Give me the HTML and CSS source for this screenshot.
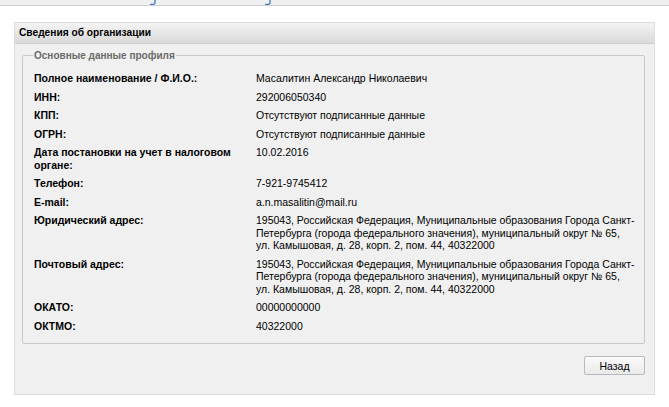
FILE: index.html
```html
<!DOCTYPE html>
<html lang="ru">
<head>
    <meta charset="UTF-8">
    <title>Сведения об организации</title>
    <link rel="stylesheet" href="styles.css">
</head>
<body>
    <div class="topnav">
        <svg class="topnav-mark m1" width="8" height="5" viewBox="0 0 8 5"><path d="M6 0 V2.5 Q6 4.5 3.5 4.5 H1" fill="none" stroke="#4a7dbd" stroke-width="1.4"/></svg>
        <svg class="topnav-mark m2" width="8" height="5" viewBox="0 0 8 5"><path d="M6 0 V2.5 Q6 4.5 3.5 4.5 H1" fill="none" stroke="#4a7dbd" stroke-width="1.4"/></svg>
    </div>

    <div class="panel">
        <div class="panel-header">Сведения об организации</div>
        <div class="panel-body">
            <fieldset class="group">
                <legend>Основные данные профиля</legend>
                <table class="info">
                    <tr><th>Полное наименование / Ф.И.О.:</th><td>Масалитин Александр Николаевич</td></tr>
                    <tr><th>ИНН:</th><td>292006050340</td></tr>
                    <tr><th>КПП:</th><td>Отсутствуют подписанные данные</td></tr>
                    <tr><th>ОГРН:</th><td>Отсутствуют подписанные данные</td></tr>
                    <tr><th>Дата постановки на учет в налоговом органе:</th><td>10.02.2016</td></tr>
                    <tr><th>Телефон:</th><td>7-921-9745412</td></tr>
                    <tr><th>E-mail:</th><td>a.n.masalitin@mail.ru</td></tr>
                    <tr><th>Юридический адрес:</th><td>195043, Российская Федерация, Муниципальные образования Города Санкт-Петербурга (города федерального значения), муниципальный округ № 65, ул. Камышовая, д. 28, корп. 2, пом. 44, 40322000</td></tr>
                    <tr><th>Почтовый адрес:</th><td>195043, Российская Федерация, Муниципальные образования Города Санкт-Петербурга (города федерального значения), муниципальный округ № 65, ул. Камышовая, д. 28, корп. 2, пом. 44, 40322000</td></tr>
                    <tr><th>ОКАТО:</th><td>00000000000</td></tr>
                    <tr><th>ОКТМО:</th><td>40322000</td></tr>
                </table>
            </fieldset>
            <div class="actions">
                <button type="button" class="btn">Назад</button>
            </div>
        </div>
    </div>
</body>
</html>
```

FILE: styles.css
```css
body {
    margin: 0;
    background: #fff;
    font-family: "Liberation Sans", Arial, sans-serif;
    font-size: 10.5px;
    color: #000;
}
.topnav {
    height: 5px;
    overflow: hidden;
    background: #f0f0f0;
    border-bottom: 1px solid #cfcfcf;
    position: relative;
}
.topnav-mark {
    position: absolute;
    top: 0;
}
.m1 { left: 149px; }
.m2 { left: 264px; }
.panel {
    margin: 16px 14px 0 14px;
    width: 639px;
    border: 1px solid #dcdcdc;
    background: #f0f0f0;
}
.panel-header {
    height: 20px;
    line-height: 20px;
    padding-left: 4px;
    font-size: 10.2px;
    font-weight: bold;
    background: linear-gradient(#f4f4f4, #d9d9d9);
    border-bottom: 1px solid #cfcfcf;
}
.panel-body {
    padding: 6px 9px 0 7px;
}
.group {
    margin: 0;
    padding: 2px 2px 8px 11px;
    border: 1px solid #c9c9c9;
    border-radius: 2px;
}
.group legend {
    padding: 0 1px;
    margin-left: -1px;
    font-size: 10px;
    font-weight: bold;
    color: #6a6a6a;
}
.info {
    border-collapse: collapse;
    margin-top: 6px;
}
.info th {
    width: 222px;
    padding: 3px 0;
    text-align: left;
    vertical-align: top;
    font-weight: bold;
    line-height: 12.5px;
}
.info td {
    width: 380px;
    padding: 3px 0;
    vertical-align: top;
    line-height: 12.5px;
}
.actions {
    display: flex;
    justify-content: flex-end;
    padding: 12px 0 19px;
}
.btn {
    width: 61px;
    height: 19px;
    padding: 0;
    font-family: inherit;
    font-size: 10.5px;
    background: linear-gradient(#fbfbfb, #e9e9e9);
    border: 1px solid #b9b9b9;
    border-radius: 2px;
    color: #000;
}
```
